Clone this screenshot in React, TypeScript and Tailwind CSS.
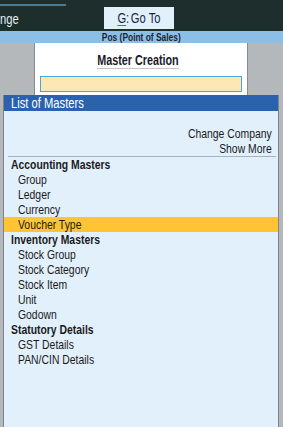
import React from "react";

const groups: { title: string; items: string[] }[] = [
  { title: "Accounting Masters", items: ["Group", "Ledger", "Currency", "Voucher Type"] },
  { title: "Inventory Masters", items: ["Stock Group", "Stock Category", "Stock Item", "Unit", "Godown"] },
  { title: "Statutory Details", items: ["GST Details", "PAN/CIN Details"] },
];

function L({ children }: { children: React.ReactNode }) {
  return <span className="inline-block whitespace-nowrap origin-left scale-x-[0.8]">{children}</span>;
}
function R({ children }: { children: React.ReactNode }) {
  return <span className="inline-block whitespace-nowrap origin-right scale-x-[0.8]">{children}</span>;
}
function C({ children, className }: { children: React.ReactNode; className?: string }) {
  return (
    <span className={"inline-block whitespace-nowrap origin-center scale-x-[0.8] " + (className ?? "")}>
      {children}
    </span>
  );
}

export default function App() {
  return (
    <div className="w-[283px] h-[427px] overflow-hidden relative flex flex-col bg-[#b4b8bb] font-['Liberation_Sans','Arial',sans-serif] text-[#1a1a1a]">
      {/* Top bar */}
      <div className="h-[31px] bg-[#1e2e2d] flex flex-col shrink-0">
        <div className="mt-[4px] w-[66px] h-[2px] bg-[#4a7b98]" />
        <div className="flex items-start h-[25px]">
          <div className="w-[104px] pt-[5px] text-[14px] leading-[16px] text-[#e6ecee]">
            <L>nge</L>
          </div>
          <div className="mt-[1px] w-[70px] h-[22px] bg-[#e1f0fb] flex items-center justify-center text-[14px] leading-[16px] text-[#1a2a3a]">
            <C>
              <span className="underline decoration-[#3a6fd0] underline-offset-2">G</span>
              <span>:</span>
              <span className="ml-[2px]">Go To</span>
            </C>
          </div>
        </div>
      </div>
      {/* Blue strip */}
      <div className="h-[12px] bg-[#8cbfe7] flex items-center justify-center shrink-0">
        <C className="text-[10.5px] leading-[12px] font-bold text-[#1a2433]">Pos (Point of Sales)</C>
      </div>
      {/* Gray area */}
      <div className="flex-1 relative">
        <div className="ml-[34px] w-[214px] h-[70px] bg-white border-x border-[#878b8e] flex flex-col items-center">
          <div className="pt-[9px] pr-[6px] flex justify-center">
            <div className="w-[82px] flex justify-center text-[14px] leading-[16px] font-bold text-[#1a1a2a] border-b border-[#c4c4c4]">
              <C className="scale-x-[0.77]">Master Creation</C>
            </div>
          </div>
          <div className="mt-[7px] self-stretch mx-[5px] h-[16px] bg-[#fde7b3] border border-[#48a6dc]" />
        </div>
      </div>
      {/* List of Masters popup */}
      <div className="absolute left-[3px] top-[95px] w-[276px] bottom-0 flex flex-col border-x border-[#7f8589]">
        <div className="h-[16px] bg-[#2b62ad] text-white text-[14px] leading-[16px] pl-[7px] shrink-0">
          <L>List of Masters</L>
        </div>
        <div className="flex-1 bg-[#e2f0fc] pt-[15px] text-[13px] leading-[15px]">
          <div className="text-right pr-[6px]">
            <R>Change Company</R>
          </div>
          <div className="text-right pr-[6px]">
            <R>Show More</R>
          </div>
          <div className="ml-[4px] mr-[2px] h-[1px] bg-[#a9b1b9]" />
          {groups.map((g) => (
            <div key={g.title}>
              <div className="pl-[7px] font-bold">
                <L>{g.title}</L>
              </div>
              {g.items.map((it) => (
                <div
                  key={it}
                  className={it === "Voucher Type" ? "pl-[14px] bg-[#fec434]" : "pl-[14px]"}
                >
                  <L>{it}</L>
                </div>
              ))}
            </div>
          ))}
        </div>
      </div>
    </div>
  );
}
